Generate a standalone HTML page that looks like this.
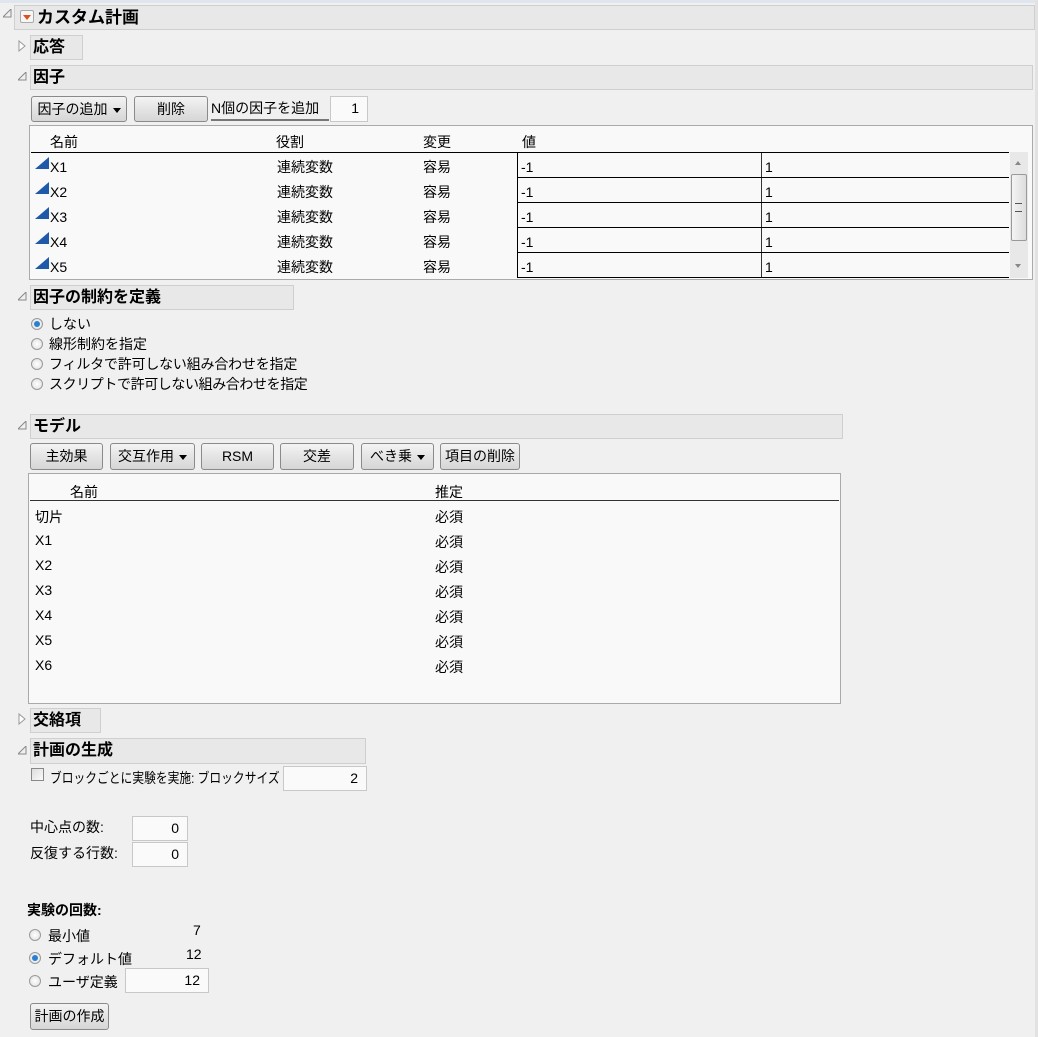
<!DOCTYPE html>
<html><head><meta charset="utf-8"><style>
body{margin:0;width:1038px;height:1037px;background:#f0f0f0;position:relative;overflow:hidden;font-family:"Liberation Sans","Noto Sans CJK JP",sans-serif;font-size:14px;color:#000}
.a{position:absolute;white-space:nowrap}
.hd{position:absolute;background:#e8e8e8;border:1px solid #cfcfcf;font-weight:bold;font-size:16px;line-height:23px;padding-left:2px;box-sizing:border-box}
.tri{position:absolute;width:0;height:0}
.btn{position:absolute;box-sizing:border-box;border:1px solid #8a8a8a;border-radius:3px;background:linear-gradient(#f4f4f4,#e4e4e4 50%,#d6d6d6);text-align:center;font-size:14px;line-height:24px}
.inp{position:absolute;box-sizing:border-box;background:#fafafa;border:1px solid #c8c8c8;text-align:right;padding-right:8px;font-size:14px;line-height:22px}
.rad{position:absolute;width:12px;height:12px;border-radius:50%;border:1px solid #9a9a9a;background:radial-gradient(#fff,#ddd);box-sizing:border-box}
.rad.on::after{content:"";position:absolute;left:2px;top:2px;width:6px;height:6px;border-radius:50%;background:#2a7fd0}
.dd{display:inline-block;width:0;height:0;border-left:4px solid transparent;border-right:4px solid transparent;border-top:5px solid #000;vertical-align:middle;margin-left:5px}
.open{position:absolute;width:9px;height:9px}
</style></head><body>
<div class="a" style="left:0;top:0;width:1038px;height:3px;background:#dfe6ee"></div>
<div class="a" style="left:1035px;top:0;width:3px;height:1037px;background:#e2e2e2"></div>

<svg class="open" style="left:3px;top:9px" viewBox="0 0 9 9"><path d="M8 0V8H0Z" fill="none" stroke="#888"/></svg>
<div class="hd" style="left:14px;top:5px;width:1021px;height:25px;padding-left:22px;font-size:17px">カスタム計画</div>
<div class="a" style="left:20px;top:10px;width:14px;height:13px;border:1px solid #aaa;border-radius:2px;background:#f6f6f6;box-sizing:border-box"><div class="tri" style="left:2px;top:4px;border-left:4px solid transparent;border-right:4px solid transparent;border-top:5px solid #d9531e"></div></div>

<svg class="open" style="left:18px;top:40px;width:8px;height:12px" viewBox="0 0 8 12"><path d="M1 1L7 6L1 11Z" fill="#fff" stroke="#999"/></svg>
<div class="hd" style="left:30px;top:35px;width:53px;height:25px">応答</div>

<svg class="open" style="left:18px;top:72px" viewBox="0 0 9 9"><path d="M8 0V8H0Z" fill="none" stroke="#888"/></svg>
<div class="hd" style="left:30px;top:65px;width:1003px;height:25px">因子</div>

<div class="btn" style="left:31px;top:96px;width:96px;height:26px">因子の追加<span class="dd"></span></div>
<div class="btn" style="left:134px;top:96px;width:74px;height:26px">削除</div>
<div class="a" style="left:211px;top:97px;line-height:22px;border-bottom:2px solid #777;width:118px">N個の因子を追加</div>
<div class="inp" style="left:330px;top:96px;width:38px;height:26px">1</div>

<div class="a" style="left:29px;top:125px;width:1004px;height:155px;background:#f9f9f9;border:1px solid #aaa;box-sizing:border-box"></div>
<div class="a" style="left:50px;top:132px">名前</div>
<div class="a" style="left:276px;top:132px">役割</div>
<div class="a" style="left:423px;top:132px">変更</div>
<div class="a" style="left:522px;top:132px">値</div>
<div class="a" style="left:31px;top:152px;width:978px;height:1px;background:#000"></div>
<div class="a" style="left:1010px;top:152px;width:18px;height:126px;background:#e8e8e8"></div>
<div class="a" style="left:1011px;top:174px;width:16px;height:67px;border:1px solid #999;border-radius:2px;background:linear-gradient(90deg,#f4f4f4,#ddd);box-sizing:border-box"></div>
<div class="a" style="left:1015px;top:203px;width:7px;height:7px;border-top:1px solid #555;border-bottom:1px solid #555"></div>
<div class="tri" style="left:1015px;top:161px;border-left:3px solid transparent;border-right:3px solid transparent;border-bottom:4px solid #888"></div>
<div class="tri" style="left:1015px;top:264px;border-left:3px solid transparent;border-right:3px solid transparent;border-top:4px solid #888"></div>

<div id="rows"></div>

<svg class="open" style="left:18px;top:292px" viewBox="0 0 9 9"><path d="M8 0V8H0Z" fill="none" stroke="#888"/></svg>
<div class="hd" style="left:30px;top:285px;width:264px;height:25px">因子の制約を定義</div>
<div class="rad on" style="left:31px;top:318px"></div><div class="a" style="left:49px;top:314px">しない</div>
<div class="rad" style="left:31px;top:338px"></div><div class="a" style="left:49px;top:334px">線形制約を指定</div>
<div class="rad" style="left:31px;top:358px"></div><div class="a" style="left:49px;top:354px;letter-spacing:-0.2px">フィルタで許可しない組み合わせを指定</div>
<div class="rad" style="left:31px;top:378px"></div><div class="a" style="left:49px;top:374px;letter-spacing:-0.4px">スクリプトで許可しない組み合わせを指定</div>

<svg class="open" style="left:18px;top:421px" viewBox="0 0 9 9"><path d="M8 0V8H0Z" fill="none" stroke="#888"/></svg>
<div class="hd" style="left:30px;top:414px;width:813px;height:25px">モデル</div>
<div class="btn" style="left:30px;top:443px;width:73px;height:27px">主効果</div>
<div class="btn" style="left:110px;top:443px;width:85px;height:27px">交互作用<span class="dd"></span></div>
<div class="btn" style="left:201px;top:443px;width:73px;height:27px">RSM</div>
<div class="btn" style="left:280px;top:443px;width:74px;height:27px">交差</div>
<div class="btn" style="left:361px;top:443px;width:73px;height:27px">べき乗<span class="dd"></span></div>
<div class="btn" style="left:440px;top:443px;width:80px;height:27px">項目の削除</div>

<div class="a" style="left:28px;top:473px;width:813px;height:231px;background:#f9f9f9;border:1px solid #aaa;box-sizing:border-box"></div>
<div class="a" style="left:70px;top:482px">名前</div>
<div class="a" style="left:435px;top:482px">推定</div>
<div class="a" style="left:30px;top:500px;width:809px;height:1px;background:#333"></div>
<div id="mrows"></div>

<svg class="open" style="left:18px;top:713px;width:8px;height:12px" viewBox="0 0 8 12"><path d="M1 1L7 6L1 11Z" fill="#fff" stroke="#999"/></svg>
<div class="hd" style="left:30px;top:708px;width:71px;height:25px">交絡項</div>
<svg class="open" style="left:18px;top:746px" viewBox="0 0 9 9"><path d="M8 0V8H0Z" fill="none" stroke="#888"/></svg>
<div class="hd" style="left:30px;top:738px;width:336px;height:26px">計画の生成</div>

<div class="a" style="left:31px;top:768px;width:13px;height:13px;border:1px solid #888;background:linear-gradient(135deg,#ddd,#fafafa);box-sizing:border-box"></div>
<div class="a" style="left:50px;top:768px;transform:scaleX(0.84);transform-origin:0 0">ブロックごとに実験を実施: ブロックサイズ</div>
<div class="inp" style="left:283px;top:766px;width:84px;height:25px">2</div>

<div class="a" style="left:30px;top:817px">中心点の数:</div>
<div class="inp" style="left:132px;top:816px;width:56px;height:25px">0</div>
<div class="a" style="left:30px;top:843px">反復する行数:</div>
<div class="inp" style="left:132px;top:842px;width:56px;height:25px">0</div>

<div class="a" style="left:27px;top:900px;font-weight:bold">実験の回数:</div>
<div class="rad" style="left:29px;top:929px"></div><div class="a" style="left:48px;top:926px">最小値</div>
<div class="a" style="left:193px;top:922px">7</div>
<div class="rad on" style="left:29px;top:952px"></div><div class="a" style="left:48px;top:949px">デフォルト値</div>
<div class="a" style="left:186px;top:946px">12</div>
<div class="rad" style="left:29px;top:975px"></div><div class="a" style="left:48px;top:972px">ユーザ定義</div>
<div class="inp" style="left:125px;top:968px;width:84px;height:25px">12</div>
<div class="btn" style="left:30px;top:1003px;width:79px;height:27px">計画の作成</div>

<script>
var h='';
for(var i=0;i<5;i++){var y=153+i*25;
h+='<svg class="a" style="left:35px;top:'+(y+4)+'px" width="15" height="12" viewBox="0 0 15 12"><path d="M0 12L14 0V12Z" fill="#1e5aa8"/></svg>';
h+='<div class="a" style="left:50px;top:'+(y+6)+'px">X'+(i+1)+'</div>';
h+='<div class="a" style="left:277px;top:'+(y+4)+'px">連続変数</div>';
h+='<div class="a" style="left:423px;top:'+(y+4)+'px">容易</div>';
h+='<div class="a" style="left:517px;top:'+y+'px;width:1px;height:25px;background:#000"></div>';
h+='<div class="a" style="left:761px;top:'+y+'px;width:1px;height:25px;background:#333"></div>';
h+='<div class="a" style="left:517px;top:'+(y+24)+'px;width:492px;height:1px;background:#000"></div>';
h+='<div class="a" style="left:521px;top:'+(y+6)+'px">-1</div>';
h+='<div class="a" style="left:765px;top:'+(y+6)+'px">1</div>';}
document.getElementById('rows').innerHTML=h;
var n=['切片','X1','X2','X3','X4','X5','X6'],m='';
for(var j=0;j<7;j++){var y2=507+j*25;m+='<div class="a" style="left:35px;top:'+y2+'px">'+n[j]+'</div><div class="a" style="left:435px;top:'+y2+'px">必須</div>';}
document.getElementById('mrows').innerHTML=m;
</script>
</body></html>
